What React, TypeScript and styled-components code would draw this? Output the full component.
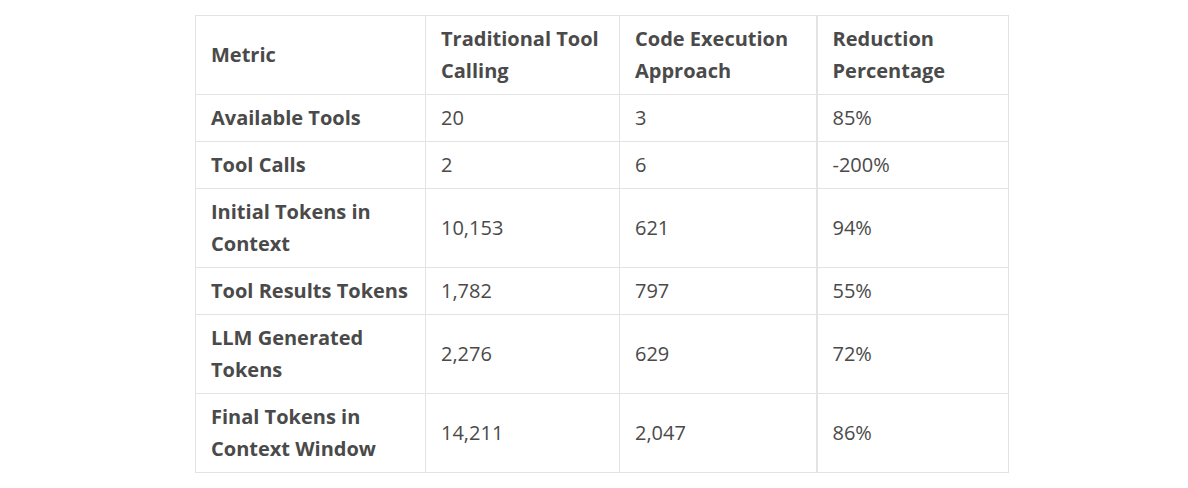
import styled, { createGlobalStyle } from "styled-components";

const rows: string[][] = [
  ["Available Tools", "20", "3", "85%"],
  ["Tool Calls", "2", "6", "-200%"],
  ["Initial Tokens in Context", "10,153", "621", "94%"],
  ["Tool Results Tokens", "1,782", "797", "55%"],
  ["LLM Generated Tokens", "2,276", "629", "72%"],
  ["Final Tokens in Context Window", "14,211", "2,047", "86%"],
];

const headers = [
  "Metric",
  "Traditional Tool Calling",
  "Code Execution Approach",
  "Reduction Percentage",
];

const colWidths = [230, 194, 197, 192];

export default function App() {
  return (
    <>
      <GlobalStyle />
      <Page>
        <Table>
          <colgroup>
            {colWidths.map((w, i) => (
              <Col key={i} $width={w} />
            ))}
          </colgroup>
          <thead>
            <tr>
              {headers.map((h, i) => (
                <HeadCell key={h} $split={i === 2}>
                  {h}
                </HeadCell>
              ))}
            </tr>
          </thead>
          <tbody>
            {rows.map((row) => (
              <tr key={row[0]}>
                {row.map((cell, i) => (
                  <Cell key={i} $bold={i === 0} $split={i === 2}>
                    {cell}
                  </Cell>
                ))}
              </tr>
            ))}
          </tbody>
        </Table>
      </Page>
    </>
  );
}

const GlobalStyle = createGlobalStyle`
  body {
    margin: 0;
    background: #ffffff;
    font-family: "Open Sans", "Liberation Sans", sans-serif;
    color: #4a4a4a;
  }
`;

const Page = styled.div`
  padding: 15px 0 0 195px;
`;

const Table = styled.table`
  border-collapse: collapse;
  table-layout: fixed;
  width: 814px;
  border: 1px solid #e3e3e3;
`;

const Col = styled.col<{ $width: number }>`
  width: ${(props) => props.$width}px;
`;

const HeadCell = styled.th<{ $split?: boolean }>`
  text-align: left;
  font-weight: 700;
  font-size: 20px;
  line-height: 32px;
  padding: 7px 15px;
  border: 1px solid #e3e3e3;
  border-right-width: ${(props) => (props.$split ? "2px" : "1px")};
`;

const Cell = styled.td<{ $bold?: boolean; $split?: boolean }>`
  font-weight: ${(props) => (props.$bold ? 700 : 400)};
  font-size: 20px;
  line-height: 32px;
  padding: 7px 15px;
  border: 1px solid #e3e3e3;
  border-right-width: ${(props) => (props.$split ? "2px" : "1px")};
`;
